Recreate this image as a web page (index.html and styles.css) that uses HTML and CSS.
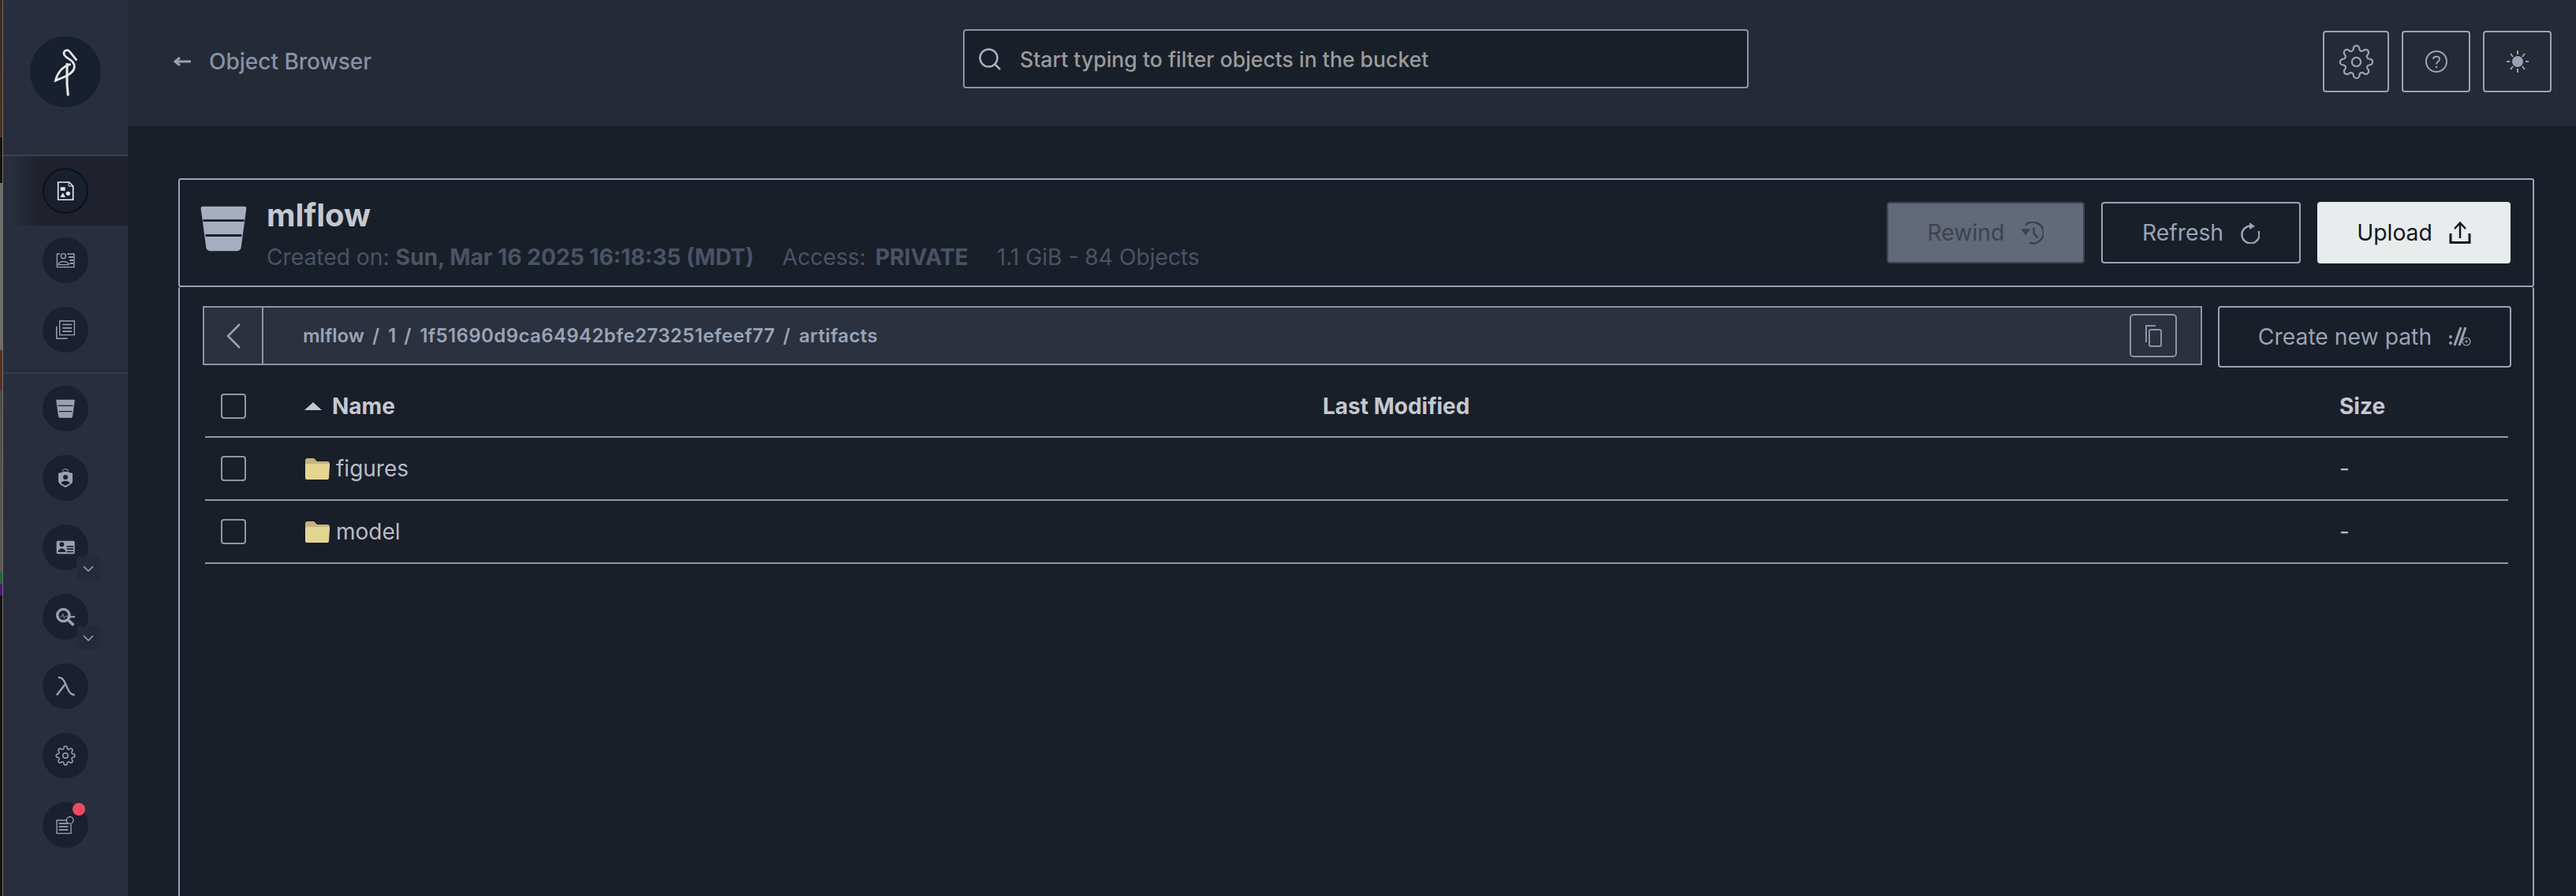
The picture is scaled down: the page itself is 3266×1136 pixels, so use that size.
FILE: index.html
```html
<!DOCTYPE html>
<html lang="en">
<head>
<meta charset="utf-8">
<title>Object Browser</title>
<link rel="stylesheet" href="styles.css">
</head>
<body>
<div class="app">
  <div class="strip"></div>
  <nav class="sidebar">
    <div class="logo-area">
      <div class="logo">
        <svg class="logo-svg" viewBox="111 138 270 270" fill="none" stroke="#e8e9ec" stroke-width="8">
          <path d="M289 230 L262 196 C252 186 236 192 241 208 C248 224 281 228 280 254 C279 272 264 280 252 288 L208 307 C214 282 232 252 266 244"/>
          <path d="M252 240 L252 320 L256 364" stroke-width="9"/>
        </svg>
      </div>
    </div>
    <div class="nav-group nav-group-first">
      <div class="nav-item active"><span class="circle">
        <svg class="ico" viewBox="210 690 72 72"><path class="st" d="M218 693H260L275 708V760H218Z" stroke-width="5"/><path class="wh" d="M227 712H245V725H227ZM236 733L246 750H226Z"/><circle class="wh" cx="256" cy="736" r="8"/><path class="st" d="M258 693V708H275" stroke-width="3"/></svg>
      </span></div>
      <div class="nav-item"><span class="circle">
        <svg class="ico" viewBox="210 955 72 72"><path class="st-g" d="M225 967H214V1017H279V967H252" stroke-width="4"/><circle class="st-g" cx="238" cy="975" r="9" stroke-width="4"/><path class="st-g" d="M219 1008C220 992 256 992 258 1008Z" stroke-width="4"/><path class="fl-g" d="M258 976H276V982H258ZM262 988H276V994H262ZM262 1000H276V1006H262Z"/></svg>
      </span></div>
      <div class="nav-item"><span class="circle">
        <svg class="ico" viewBox="210 78 72 72"><path class="st-g" d="M224 81H280V134H224Z" stroke-width="4"/><path class="fl-g" d="M235 92H270V97H235ZM235 105H270V110H235ZM235 118H270V123H235Z"/><path class="st-g" d="M212 101V148H254" stroke-width="5"/></svg>
      </span></div>
    </div>
    <div class="nav-group">
      <div class="nav-item"><span class="circle">
        <svg class="ico" viewBox="210 378 72 72"><path class="fl-g" d="M214 380H278Q282 380 281 385L273 444Q272 449 267 449H225Q220 449 219 444L211 385Q210 380 214 380Z"/><path class="ln-d" d="M218 403H274M221 425H271" stroke-width="3.5"/></svg>
      </span></div>
      <div class="nav-item"><span class="circle">
        <svg class="ico" viewBox="210 642 72 72"><path class="st-g" d="M235 656V653A11 9 0 0 1 257 653V656" stroke-width="3"/><path class="fl-g" d="M219 660L246 653L273 660V690C273 700 258 708 246 714C234 708 219 700 219 690Z"/><circle class="fl-d" cx="246" cy="675" r="9"/><path class="fl-d" d="M230 699C230 686 262 686 262 699L246 707Z"/></svg>
      </span></div>
      <div class="nav-item"><span class="circle">
        <svg class="ico" viewBox="210 906 72 72"><rect class="fl-g" x="212" y="917" width="69" height="50" rx="5"/><circle class="fl-d" cx="232" cy="931" r="9"/><path class="fl-d" d="M218 960C218 942 246 942 247 960Z"/><path class="fl-d" d="M251 936H276V941H251ZM251 946H276V951H251ZM251 956H276V961H251Z"/></svg>
      </span><span class="chev"><svg class="chev-svg" viewBox="0 0 14 8"><path d="M1 1L7 7L13 1"/></svg></span></div>
      <div class="nav-item"><span class="circle">
        <svg class="ico" viewBox="210 60 72 72"><circle class="st-g" cx="238" cy="90" r="23" stroke-width="10"/><path class="st-g" d="M256 108L277 128" stroke-width="11"/><path class="st-g" d="M226 95H232L236 84L241 102L245 94H282" stroke-width="2.5"/><path class="st-g" d="M256 97H282" stroke-width="5"/></svg>
      </span><span class="chev"><svg class="chev-svg" viewBox="0 0 14 8"><path d="M1 1L7 7L13 1"/></svg></span></div>
      <div class="nav-item"><span class="circle">
        <svg class="ico" viewBox="210 324 72 72"><path class="st-g" d="M218 327C234 325 241 338 251 362C259 382 266 393 281 393M246 351L213 394" stroke-width="7"/></svg>
      </span></div>
      <div class="nav-item"><span class="circle">
        <svg class="ico ico-gear" viewBox="0 0 24 24"><path class="st-g" stroke-width="1.4" d="M12 15a3 3 0 1 0 0-6 3 3 0 0 0 0 6z"/><path class="st-g" stroke-width="1.4" d="M19.4 15a1.65 1.65 0 0 0 .33 1.82l.06.06a2 2 0 0 1 0 2.83 2 2 0 0 1-2.83 0l-.06-.06a1.65 1.65 0 0 0-1.82-.33 1.65 1.65 0 0 0-1 1.51V21a2 2 0 0 1-2 2 2 2 0 0 1-2-2v-.09A1.65 1.65 0 0 0 9 19.4a1.65 1.65 0 0 0-1.82.33l-.06.06a2 2 0 0 1-2.83 0 2 2 0 0 1 0-2.83l.06-.06a1.65 1.65 0 0 0 .33-1.82 1.65 1.65 0 0 0-1.51-1H3a2 2 0 0 1-2-2 2 2 0 0 1 2-2h.09A1.65 1.65 0 0 0 4.6 9a1.65 1.65 0 0 0-.33-1.82l-.06-.06a2 2 0 0 1 0-2.83 2 2 0 0 1 2.83 0l.06.06a1.65 1.65 0 0 0 1.82.33H9a1.65 1.65 0 0 0 1-1.51V3a2 2 0 0 1 2-2 2 2 0 0 1 2 2v.09a1.65 1.65 0 0 0 1 1.51 1.65 1.65 0 0 0 1.82-.33l.06-.06a2 2 0 0 1 2.83 0 2 2 0 0 1 0 2.83l-.06.06a1.65 1.65 0 0 0-.33 1.82V9a1.65 1.65 0 0 0 1.51 1H21a2 2 0 0 1 2 2 2 2 0 0 1-2 2h-.09a1.65 1.65 0 0 0-1.51 1z"/></svg>
      </span></div>
      <div class="nav-item"><span class="circle">
        <svg class="ico" viewBox="210 852 72 72"><path class="st-g" d="M250 870H213V920H267V885" stroke-width="4"/><path class="fl-g" d="M221 880H256V885H221ZM221 892H256V897H221ZM221 904H256V909H221Z"/><circle class="st-g" cx="263" cy="870" r="13" stroke-width="4"/></svg>
      </span><span class="dot"></span></div>
    </div>
  </nav>
  <div class="main">
    <header class="header">
      <a class="back"><svg class="back-ico" viewBox="0 0 22 12"><path d="M22 6H4M8 1L2 6L8 11"/></svg><span>Object Browser</span></a>
      <div class="search">
        <svg class="search-ico" viewBox="0 0 28 28"><circle cx="12.500" cy="12.500" r="11"/><path d="M20 20L27 27"/></svg>
        <span class="search-text">Start typing to filter objects in the bucket</span>
      </div>
      <div class="actions">
        <button class="h-btn h-btn-gear"><svg class="gear" viewBox="0 0 24 24"><path d="M12 15a3 3 0 1 0 0-6 3 3 0 0 0 0 6z"/><path d="M19.4 15a1.65 1.65 0 0 0 .33 1.82l.06.06a2 2 0 0 1 0 2.83 2 2 0 0 1-2.83 0l-.06-.06a1.65 1.65 0 0 0-1.82-.33 1.65 1.65 0 0 0-1 1.51V21a2 2 0 0 1-2 2 2 2 0 0 1-2-2v-.09A1.65 1.65 0 0 0 9 19.4a1.65 1.65 0 0 0-1.82.33l-.06.06a2 2 0 0 1-2.83 0 2 2 0 0 1 0-2.83l.06-.06a1.65 1.65 0 0 0 .33-1.82 1.65 1.65 0 0 0-1.51-1H3a2 2 0 0 1-2-2 2 2 0 0 1 2-2h.09A1.65 1.65 0 0 0 4.6 9a1.65 1.65 0 0 0-.33-1.82l-.06-.06a2 2 0 0 1 0-2.83 2 2 0 0 1 2.83 0l.06.06a1.65 1.65 0 0 0 1.82.33H9a1.65 1.65 0 0 0 1-1.51V3a2 2 0 0 1 2-2 2 2 0 0 1 2 2v.09a1.65 1.65 0 0 0 1 1.51 1.65 1.65 0 0 0 1.82-.33l.06-.06a2 2 0 0 1 2.83 0 2 2 0 0 1 0 2.83l-.06.06a1.65 1.65 0 0 0-.33 1.82V9a1.65 1.65 0 0 0 1.51 1H21a2 2 0 0 1 2 2 2 2 0 0 1-2 2h-.09a1.65 1.65 0 0 0-1.51 1z"/></svg></button>
        <button class="h-btn h-btn-help"><svg class="help" viewBox="0 0 28 28"><circle cx="14" cy="14" r="13"/><path d="M10 11C10 6.500 18 6.500 18 11C18 14 14 14 14 17.500"/><circle class="help-dot" cx="14" cy="21" r="1.300"/></svg></button>
        <button class="h-btn h-btn-sun"><svg class="sun" viewBox="0 0 28 28"><circle cx="14" cy="14" r="6"/><path d="M14 0V5M14 23V28M0 14H4M24 14H28M5 4L8 8M20 8L23 4M5 24L8 20M20 20L23 24"/></svg></button>
      </div>
    </header>
    <main class="content">
      <section class="panel panel-top">
        <svg class="bucket" viewBox="210 378 72 72"><path class="fl-b" d="M214 380H278Q282 380 281 385L273 444Q272 449 267 449H225Q220 449 219 444L211 385Q210 380 214 380Z"/><path class="ln-d2" d="M214 402H278M218 425H274" stroke-width="3.500"/></svg>
        <div class="title-block">
          <h1 class="title">mlflow</h1>
          <div class="meta">
            <span>Created on: <b>Sun, Mar 16 2025 16:18:35 (MDT)</b></span>
            <span>Access: <b class="access">PRIVATE</b></span>
            <span>1.1 GiB - 84 Objects</span>
          </div>
        </div>
        <div class="top-btns">
          <button class="btn btn-disabled">Rewind<svg class="b-ico b-ico-dis" viewBox="0 0 28 28"><path d="M6 4A13 13 0 1 1 11 26"/><path d="M16 7V14L21 20"/><path class="b-fill-dis" d="M0 9H12L6 17Z"/></svg></button>
          <button class="btn btn-outline">Refresh<svg class="b-ico b-ico-refresh" viewBox="0 0 24 27"><path d="M13 4.500A11 11 0 1 0 22.500 11"/><path class="b-fill" d="M11 0L18 5L11 9Z"/></svg></button>
          <button class="btn btn-primary">Upload<svg class="b-ico b-ico-dark" viewBox="0 0 28 28"><path d="M14 21V3M7 9L14 1.500L21 9"/><path d="M2 15V26.500H26V15" stroke-width="3"/></svg></button>
        </div>
      </section>
      <section class="panel panel-body">
        <div class="path-row">
          <div class="crumb">
            <button class="crumb-back"><svg class="crumb-chev" viewBox="0 0 18 32"><path d="M17 1L2 16L17 31"/></svg></button>
            <div class="crumb-text"><span>mlflow</span><span class="sep">/</span><span>1</span><span class="sep">/</span><span class="hash">1f51690d9ca64942bfe273251efeef77</span><span class="sep">/</span><span class="hash">artifacts</span></div>
            <button class="copy"><svg class="copy-ico" viewBox="0 0 22 28"><path d="M14 1H2V22"/><rect x="6" y="6" width="15" height="21" rx="2"/></svg></button>
          </div>
          <button class="btn btn-outline btn-create">Create new path<svg class="path-ico" viewBox="0 0 28 26"><circle class="pf" cx="2" cy="13" r="2"/><circle class="pf" cx="2" cy="21" r="2"/><path d="M7 24L15 1M13 24L21 1" stroke-width="3"/><circle cx="22" cy="19" r="5" stroke-width="1.200"/><path d="M22 17V21M20 19H24" stroke-width="1"/></svg></button>
        </div>
        <div class="table">
          <div class="row row-head">
            <span class="check"></span>
            <span class="name-head"><i class="sort"></i>Name</span>
            <span>Last Modified</span>
            <span>Size</span>
          </div>
          <div class="row">
            <span class="check"></span>
            <span class="name"><svg class="folder" viewBox="0 0 31 27"><path class="f-back" d="M3 0H11L15 4H28Q31 4 31 7V12H0V3Q0 0 3 0Z"/><path class="f-front" d="M2 7H29Q31 7 31 9L30 25Q30 27 28 27H2Q0 27 0 25V9Q0 7 2 7Z"/></svg>figures</span>
            <span></span>
            <span>-</span>
          </div>
          <div class="row">
            <span class="check"></span>
            <span class="name"><svg class="folder" viewBox="0 0 31 27"><path class="f-back" d="M3 0H11L15 4H28Q31 4 31 7V12H0V3Q0 0 3 0Z"/><path class="f-front" d="M2 7H29Q31 7 31 9L30 25Q30 27 28 27H2Q0 27 0 25V9Q0 7 2 7Z"/></svg>model</span>
            <span></span>
            <span>-</span>
          </div>
        </div>
      </section>
    </main>
  </div>
</div>
</body>
</html>
```
FILE: styles.css
```css
* { box-sizing: border-box; }
html, body { margin: 0; height: 100%; background: #191f29; overflow: hidden; }
body { font-family: Inter, "Noto Sans", sans-serif; }
button { font-family: inherit; padding: 0; cursor: pointer; }

.app { display: flex; height: 1136px; overflow: hidden; }
.strip {
  width: 4px; flex: none; border-right: 1px solid #6f6f6b;
  background: linear-gradient(180deg,
    #3a2a20 0, #4e3020 174px, #17140f 174px, #17140f 232px,
    #6e6e6e 232px, #6e6e6e 442px,
    #5a3020 445px, #5a3020 495px,
    #4d4b46 495px, #5d5b55 725px,
    #1c6b3a 725px, #1c6b3a 740px,
    #4d1582 740px, #4d1582 755px,
    #141312 755px, #141312 100%);
}

/* Sidebar */
.sidebar { width: 158px; flex: none; background: #282e3d; }
.logo-area { height: 198px; border-bottom: 2px solid #3a4050; display: flex; justify-content: center; padding-top: 46px; }
.logo { width: 90px; height: 90px; border-radius: 50%; background: #18202f; }
.logo-svg { display: block; width: 90px; height: 90px; }
.nav-group-first { padding-bottom: 10px; border-bottom: 2px solid #343a49; }
.nav-item { height: 88px; display: flex; align-items: center; justify-content: center; position: relative; }
.nav-item.active { background: linear-gradient(90deg, #282e3d 10px, #1f222c 45px); }
.circle { width: 58px; height: 58px; border-radius: 50%; background: #1a2030; display: flex; align-items: center; justify-content: center; }
.active .circle { background: #18202f; border: 2px solid #0e1118; }
.ico { width: 24px; height: 24px; display: block; }
.ico-gear { width: 26px; height: 26px; }
.st { fill: none; stroke: #e8e9ec; }
.wh { fill: #e8e9ec; }
.st-g { fill: none; stroke: #9aa1b2; }
.fl-g { fill: #9aa1b2; }
.fl-d { fill: #1a2030; }
.ln-d { stroke: #1a2030; fill: none; }
.chev { position: absolute; left: 93px; top: 56px; width: 30px; height: 30px; border-radius: 3px; background: #242a3a; display: flex; align-items: center; justify-content: center; }
.chev-svg { width: 14px; height: 8px; fill: none; stroke: #9aa1b2; stroke-width: 1.500; }
.dot { position: absolute; left: 88px; top: 16px; width: 16px; height: 16px; border-radius: 50%; background: #ee4a60; }

/* Main column */
.main { flex: 1; min-width: 0; display: flex; flex-direction: column; }
.header { height: 160px; flex: none; background: #242a36; display: grid; grid-template-columns: 1059px 996px 1fr; align-items: center; }
.back { display: flex; align-items: center; gap: 23px; padding-left: 58px; margin-bottom: 5px; font-size: 28px; font-weight: 500; color: #8a91a3; }
.back-ico { width: 22px; height: 12px; fill: none; stroke: #9aa1b2; stroke-width: 3; }
.search { height: 75px; background: #191f29; border: 2px solid #8b93a4; border-radius: 4px; display: flex; align-items: center; gap: 24px; padding-left: 18px; margin-bottom: 11px; }
.search-ico { width: 28px; height: 28px; fill: none; stroke: #a8b0c2; stroke-width: 2.500; }
.search-text { font-size: 26.600px; font-weight: 500; color: #9b9b9b; }
.actions { display: flex; justify-content: flex-end; gap: 16px; padding-right: 31px; margin-bottom: 4px; }
.h-btn { height: 78px; background: transparent; border: 2px solid #9aa3b5; border-radius: 4px; display: flex; align-items: center; justify-content: center; }
.h-btn-gear { width: 84px; }
.h-btn-help, .h-btn-sun { width: 87px; }
.gear { width: 45px; height: 45px; fill: none; stroke: #9aa3b5; stroke-width: 1.200; }
.help { width: 28px; height: 28px; fill: none; stroke: #9aa3b5; stroke-width: 2; }
.help-dot { fill: #9aa3b5; stroke: none; }
.sun { width: 28px; height: 28px; fill: #9aa3b5; stroke: #9aa3b5; stroke-width: 2; }

/* Content */
.content { flex: 1; min-height: 0; padding: 66px 53px 0 64px; display: flex; flex-direction: column; }
.panel { border: 2px solid #9aa3b5; border-radius: 3px; }
.panel-top { height: 138px; flex: none; display: flex; align-items: center; padding: 0 28px 0 26px; }
.bucket { width: 59px; height: 59px; flex: none; margin-right: 25px; margin-bottom: 12px; }
.fl-b { fill: #a6aebf; }
.ln-d2 { stroke: #191f29; fill: none; }
.title-block { flex: 1; min-width: 0; }
.title { margin: 0; font-size: 40px; line-height: 48px; font-weight: 700; color: #c5c8d0; }
.meta { display: flex; gap: 36px; font-size: 28.200px; line-height: 36px; margin-top: 11px; margin-bottom: -2px; color: #4a5364; }
.meta b { font-weight: 700; }
.meta .access { margin-left: 4px; }
.top-btns { display: flex; gap: 21px; }
.btn { height: 78px; font-size: 28.300px; display: flex; align-items: center; justify-content: center; gap: 22px; border-radius: 4px; background: transparent; }
.btn-disabled { width: 251px; gap: 21px; background: #626978; border: 2px solid #3e4452; color: #3c4250; }
.btn-outline { border: 2px solid #9aa3b5; color: #9aa3b5; }
.top-btns .btn-outline { width: 253px; }
.btn-primary { width: 245px; gap: 21px; background: #e8eced; border: 2px solid #e8eced; color: #14181f; }
.b-ico { width: 28px; height: 28px; fill: none; stroke: #9aa3b5; stroke-width: 2.500; }
.b-ico-refresh { width: 24px; height: 27px; }
.b-ico-dis { width: 29px; height: 29px; stroke: #3c4250; }
.b-fill-dis { fill: #3c4250; stroke: none; }
.b-fill { fill: #9aa3b5; stroke: none; }
.b-ico-dark { stroke: #14181f; }

.panel-body { flex: 1; border-top: 0; padding: 24px 27px 0 29px; margin-bottom: -10px; }
.path-row { display: flex; gap: 20px; align-items: flex-start; }
.crumb { flex: 1; height: 75px; display: flex; align-items: center; background: #2b313f; border: 2px solid #8b93a4; }
.crumb-back { width: 75px; height: 100%; flex: none; background: transparent; border: 0; border-right: 2px solid #8b93a4; display: flex; align-items: center; justify-content: center; }
.crumb-chev { width: 18px; height: 32px; fill: none; stroke: #9aa3b5; stroke-width: 2.500; }
.crumb-text { flex: 1; display: flex; padding-left: 50px; font-size: 24px; font-weight: 600; color: #9aa3b5; }
.sep { margin: 0 11px 0 10px; }
.hash { letter-spacing: 0.400px; }
.copy { width: 60px; height: 55px; margin-right: 30px; background: transparent; border: 2px solid #8b93a4; border-radius: 5px; display: flex; align-items: center; justify-content: center; }
.copy-ico { width: 22px; height: 28px; fill: none; stroke: #8b93a4; stroke-width: 2; }
.btn-create { width: 372px; flex: none; gap: 22px; }
.path-ico { width: 28px; height: 26px; fill: none; stroke: #9aa3b5; stroke-width: 2; }
.pf { fill: #9aa3b5; stroke: none; }

.table { margin: 0 4px 0 3px; padding-top: 9px; }
.row { height: 80px; display: grid; grid-template-columns: 126px 1291px 1289px 1fr; align-items: center; border-bottom: 2px solid #8f96a6; font-size: 28px; color: #b8bcc5; }
.row-head { font-weight: 700; color: #c5c8d0; padding-top: 1px; }
.check { width: 32px; height: 32px; margin-left: 20px; border: 2px solid #8f96a6; border-radius: 4px; }
.name, .name-head { display: flex; align-items: center; }
.sort { width: 0; height: 0; margin-right: 13px; border-left: 11px solid transparent; border-right: 11px solid transparent; border-bottom: 10px solid #c5c8d0; }
.folder { width: 31px; height: 27px; margin-left: 1px; margin-right: 8px; }
.f-back { fill: #c6b47c; }
.f-front { fill: #e5d592; }
```
